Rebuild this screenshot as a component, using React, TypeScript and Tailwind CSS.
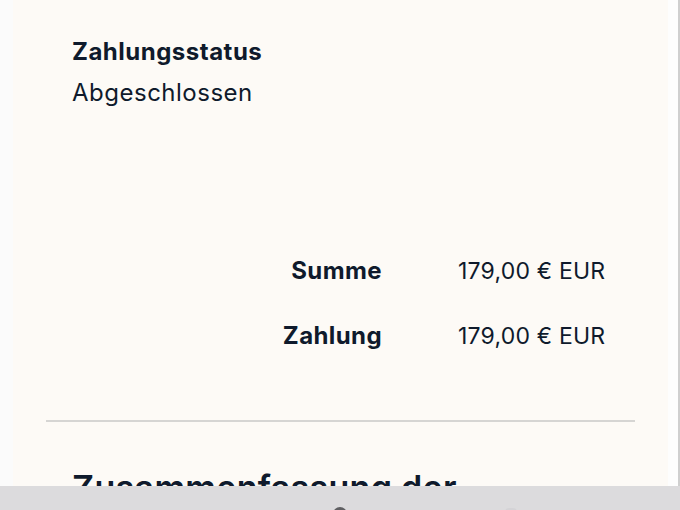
export default function App() {
  const rows = [
    { label: "Summe", value: "179,00 € EUR" },
    { label: "Zahlung", value: "179,00 € EUR" },
  ];

  return (
    <div className="flex h-[510px] w-[680px] flex-col overflow-hidden bg-[#fbfbfb] text-[#0f1a2c] [font-family:Inter,'Liberation_Sans',sans-serif]">
      <div className="flex h-[486px] overflow-hidden">
        <div className="ml-[13px] w-[655px] shrink-0 bg-[#fdfaf6]">
          <div className="px-[59px] pt-[37px]">
            <h3 className="text-[24px] font-bold leading-[30px] tracking-[0.5px]">Zahlungsstatus</h3>
            <p className="mt-[11px] text-[24px] leading-[30px] tracking-[0.5px]">Abgeschlossen</p>
          </div>

          <div className="mt-[148px] flex flex-col gap-[35px] pr-[58px]">
            {rows.map((row) => (
              <div key={row.label} className="flex justify-end leading-[30px]">
                <span className="text-right text-[24px] font-bold tracking-[0.4px]">{row.label}</span>
                <span className="ml-[76px] w-[152px] text-[23px] tracking-[0.2px]">{row.value}</span>
              </div>
            ))}
          </div>

          <div className="mx-[33px] mt-[69px] h-[2px] bg-[#d6d5d3]"></div>

          <h2 className="mt-[46px] px-[59px] text-[34px] font-semibold leading-[40px] tracking-[0.3px]">
            Zusammenfassung der Bestellung
          </h2>
        </div>
        <div className="flex-1 border-r-2 border-[#cfcfcf] bg-[#fdfdfd]"></div>
      </div>

      <div className="flex h-[24px] items-start bg-[#dcdbdd]">
        <div className="ml-[333px] mt-[21px] h-[14px] w-[14px] rounded-full bg-[#5f5f62]"></div>
        <div className="ml-[158px] mt-[22px] h-[10px] w-[12px] rounded-sm bg-[#d4d3d6]"></div>
      </div>
    </div>
  );
}
